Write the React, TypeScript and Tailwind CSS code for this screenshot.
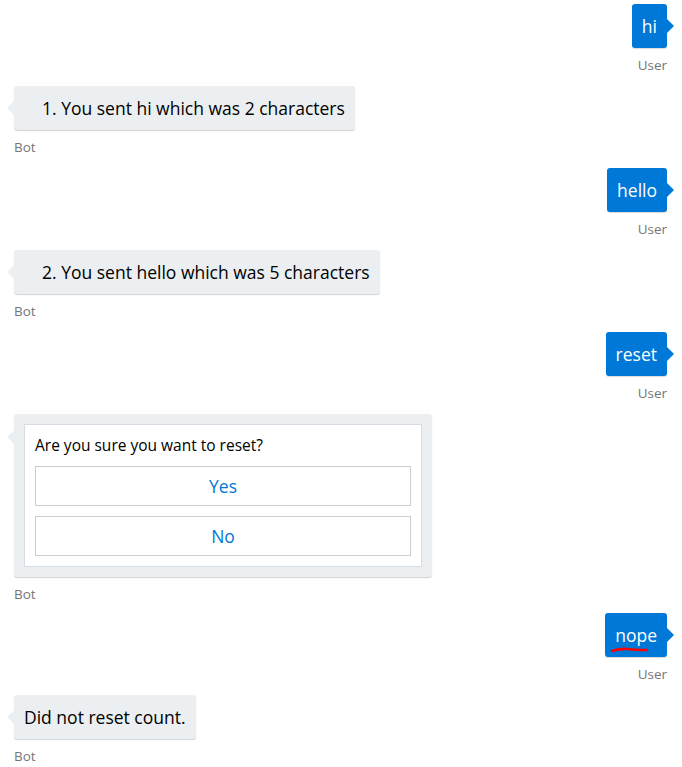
import React from "react";

const font = { fontFamily: '"Open Sans", "Noto Sans", Arial, sans-serif' };

function UserMsg({ text, squiggle }: { text: string; squiggle?: boolean }) {
  return (
    <div className="flex flex-col items-end">
      <div className="relative">
        <div className="relative h-[44px] rounded-[3px] bg-[#0078d7] px-[10px] text-[17.5px] leading-[44px] text-white shadow-[0_1px_1px_rgba(0,0,0,0.15)]">
          {text}
          {squiggle && (
            <svg
              className="absolute left-[5px] top-[33px]"
              width="40"
              height="8"
              viewBox="0 0 40 8"
            >
              <path
                d="M2 5 C8 3 12 2 18 3 C24 4 30 4 37 4"
                stroke="#ff0000"
                strokeWidth="2.4"
                fill="none"
                strokeLinecap="round"
              />
              <path d="M8 4 L16 3" stroke="#ff0000" strokeWidth="2" fill="none" />
            </svg>
          )}
        </div>
        <div className="absolute right-[-7px] top-[15px] h-0 w-0 border-y-[7px] border-l-[7px] border-y-transparent border-l-[#0078d7]" />
      </div>
      <div className="mb-[12px] mt-[8px] text-[13.5px] leading-[18px] text-[#767676]">User</div>
    </div>
  );
}

function BotMsg({ children, pl = "pl-[10px]" }: { children: React.ReactNode; pl?: string }) {
  return (
    <div className="flex flex-col items-start">
      <div className="relative">
        <div className="absolute left-[-7px] top-[15px] h-0 w-0 border-y-[7px] border-r-[7px] border-y-transparent border-r-[#eceff1]" />
        <div
          className={`h-[44px] rounded-[3px] bg-[#eceff1] pr-[10px] text-[17.5px] leading-[44px] text-black shadow-[0_1px_1px_rgba(0,0,0,0.18)] ${pl}`}
        >
          {children}
        </div>
      </div>
      <div className="mb-[12px] mt-[8px] text-[13.5px] leading-[18px] text-[#767676]">Bot</div>
    </div>
  );
}

function CardMsg() {
  return (
    <div className="flex flex-col items-start">
      <div className="relative">
        <div className="absolute left-[-7px] top-[16px] h-0 w-0 border-y-[7px] border-r-[7px] border-y-transparent border-r-[#eceff1]" />
        <div className="w-[418px] rounded-[3px] bg-[#eceff1] p-[10px] shadow-[0_1px_1px_rgba(0,0,0,0.18)]">
          <div className="flex flex-col border border-[#d6dde6] bg-white px-[10px] pb-[10px] pt-[10px]">
            <div className="text-[15.5px] leading-[21px] text-black">Are you sure you want to reset?</div>
            <div className="mt-[10px] flex flex-col gap-[10px]">
              <button className="h-[40px] w-full border border-[#cccccc] bg-white text-[17.5px] text-[#0078d7]">
                Yes
              </button>
              <button className="h-[40px] w-full border border-[#cccccc] bg-white text-[17.5px] text-[#0078d7]">
                No
              </button>
            </div>
          </div>
        </div>
      </div>
      <div className="mb-[10px] mt-[8px] text-[13.5px] leading-[18px] text-[#767676]">Bot</div>
    </div>
  );
}

export default function App() {
  return (
    <div className="h-[767px] w-[682px] overflow-hidden bg-white pl-[14px] pr-[15px] pt-[4px]" style={font}>
      <UserMsg text="hi" />
      <BotMsg pl="pl-[28px]">1. You sent hi which was 2 characters</BotMsg>
      <UserMsg text="hello" />
      <BotMsg pl="pl-[28px]">2. You sent hello which was 5 characters</BotMsg>
      <UserMsg text="reset" />
      <CardMsg />
      <UserMsg text="nope" squiggle />
      <BotMsg>Did not reset count.</BotMsg>
    </div>
  );
}
